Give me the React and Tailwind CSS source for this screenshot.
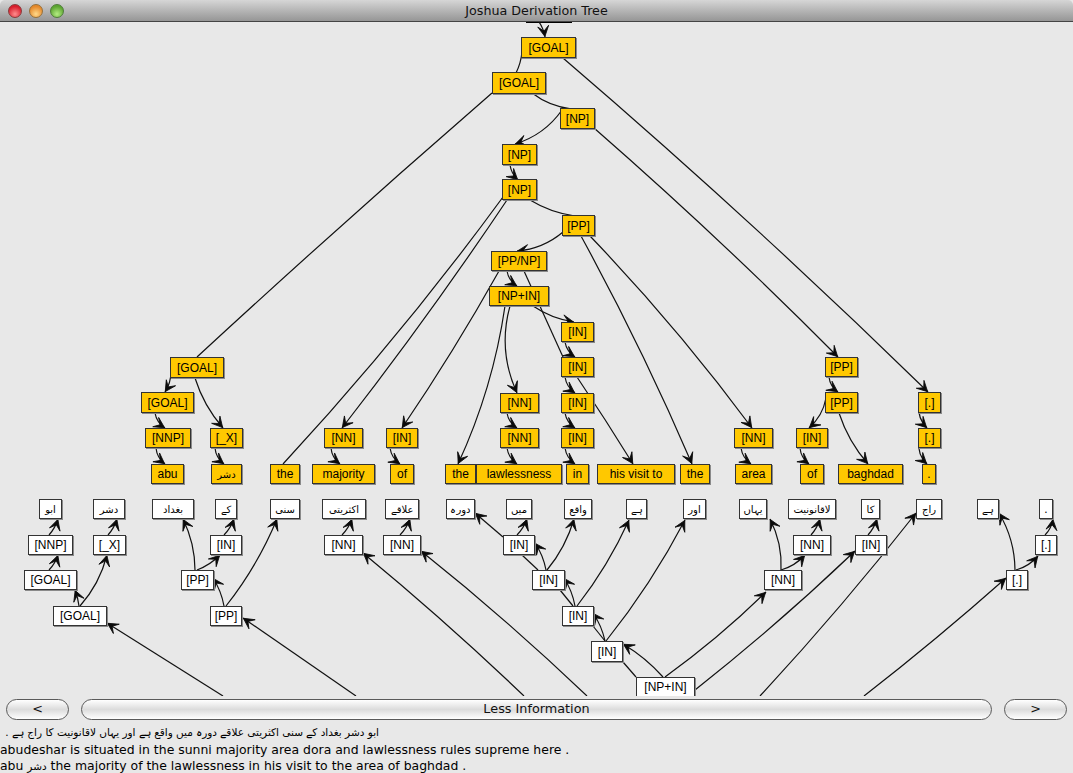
// App.jsx - Joshua derivation tree window
const nodes = [
  // source tree (orange)
  [521, 37, 55, 21, "[GOAL]"], [492, 72, 54, 22, "[GOAL]"], [560, 108, 35, 21, "[NP]"],
  [502, 144, 35, 21, "[NP]"], [502, 179, 35, 21, "[NP]"], [562, 215, 33, 21, "[PP]"],
  [491, 251, 56, 20, "[PP/NP]"], [489, 286, 60, 20, "[NP+IN]"], [561, 322, 33, 20, "[IN]"],
  [561, 357, 33, 20, "[IN]"], [561, 393, 33, 20, "[IN]"], [561, 428, 33, 20, "[IN]"],
  [500, 393, 39, 20, "[NN]"], [500, 428, 39, 20, "[NN]"],
  [170, 357, 54, 21, "[GOAL]"], [141, 392, 53, 21, "[GOAL]"], [145, 428, 46, 20, "[NNP]"],
  [210, 428, 33, 20, "[_X]"], [324, 428, 39, 20, "[NN]"], [386, 428, 32, 20, "[IN]"],
  [825, 357, 33, 20, "[PP]"], [825, 392, 33, 21, "[PP]"], [734, 428, 39, 20, "[NN]"],
  [796, 428, 32, 20, "[IN]"], [918, 392, 23, 21, "[.]"], [918, 428, 23, 20, "[.]"],
  [151, 464, 33, 20, "abu"], [211, 464, 31, 20, "دشر", 1], [270, 464, 30, 20, "the"],
  [312, 464, 63, 20, "majority"], [390, 464, 24, 20, "of"], [445, 464, 31, 20, "the"],
  [476, 464, 86, 20, "lawlessness"], [566, 464, 23, 20, "in"], [597, 464, 78, 20, "his visit to"],
  [680, 464, 30, 20, "the"], [735, 464, 37, 20, "area"], [800, 464, 24, 20, "of"],
  [838, 464, 65, 20, "baghdad"], [922, 464, 14, 20, "."],
];

const whiteNodes = [
  [39, 499, 23, 20, "ابو", 1], [93, 499, 32, 20, "دشر", 1], [152, 499, 42, 20, "بغداد", 1],
  [215, 499, 22, 20, "کے", 1], [270, 499, 30, 20, "سنی", 1], [322, 499, 44, 20, "اکثریتی", 1],
  [385, 499, 34, 20, "علاقے", 1], [446, 499, 29, 20, "دورہ", 1], [506, 499, 26, 20, "میں", 1],
  [564, 499, 28, 20, "واقع", 1], [626, 499, 21, 20, "ہے", 1], [683, 499, 23, 20, "اور", 1],
  [739, 499, 28, 20, "یہاں", 1], [788, 499, 48, 20, "لاقانونیت", 1], [861, 499, 19, 20, "کا", 1],
  [916, 499, 26, 20, "راج", 1], [977, 499, 22, 20, "ہے", 1], [1039, 499, 14, 20, "."],
  [28, 535, 45, 20, "[NNP]"], [93, 535, 33, 20, "[_X]"], [210, 535, 32, 20, "[IN]"],
  [324, 535, 39, 20, "[NN]"], [383, 535, 38, 20, "[NN]"], [503, 535, 32, 20, "[IN]"],
  [793, 535, 38, 20, "[NN]"], [855, 535, 32, 20, "[IN]"], [1035, 535, 22, 20, "[.]"],
  [24, 570, 53, 20, "[GOAL]"], [181, 570, 33, 20, "[PP]"], [532, 570, 33, 20, "[IN]"],
  [764, 570, 38, 20, "[NN]"], [1006, 570, 22, 20, "[.]"],
  [53, 606, 54, 20, "[GOAL]"], [210, 606, 32, 20, "[PP]"], [562, 606, 32, 20, "[IN]"],
  [591, 641, 32, 21, "[IN]"], [636, 677, 59, 20, "[NP+IN]"],
];

// x0 y0 -> x1 y1, bend = sideways pull of the control point, arrow = draw a head
const edges = [
  [536, 18, 545, 37, 3], [522, 52, 516, 73, 2, false], [563, 58, 928, 392, 8],
  [492, 93, 197, 357, -3, false], [532, 93, 572, 109, -6, false], [562, 110, 515, 144, 10],
  [594, 128, 838, 357, 6], [510, 165, 518, 180, -3], [503, 197, 283, 464, 10, false],
  [507, 200, 342, 428, 5], [530, 200, 575, 216, -5, false], [563, 232, 517, 251, 8],
  [581, 236, 692, 464, 6], [590, 236, 752, 428, 8], [507, 271, 517, 286, -4],
  [524, 271, 563, 357, 0, false], [499, 271, 402, 428, 4], [505, 306, 458, 464, 12],
  [510, 306, 517, 393, -16], [533, 306, 574, 322, -5], [565, 342, 575, 357, -4],
  [565, 377, 575, 393, -4], [577, 377, 633, 464, 1], [565, 413, 575, 428, -4],
  [565, 448, 575, 464, -4], [507, 413, 517, 428, -4], [507, 448, 517, 464, -4],
  [171, 372, 165, 392, 3], [195, 378, 223, 428, -6], [155, 413, 165, 428, -4],
  [156, 448, 165, 464, -4], [215, 448, 224, 464, -4], [331, 448, 340, 464, -4],
  [390, 448, 400, 464, -4], [829, 377, 838, 392, -4], [826, 398, 809, 428, 6],
  [839, 413, 868, 464, -6], [741, 448, 751, 464, -4], [800, 448, 809, 464, -4],
  [919, 405, 927, 428, -6], [919, 442, 927, 464, -6],
  // target tree
  [49, 535, 58, 519, -2], [49, 570, 58, 555, -2], [79, 606, 75, 590, -1],
  [80, 606, 107, 555, -7], [108, 535, 117, 519, -2], [195, 570, 183, 519, -6],
  [197, 570, 220, 555, -3], [224, 535, 234, 519, -2], [224, 606, 213, 578, -3],
  [226, 606, 277, 519, -7], [342, 535, 352, 519, -2], [223, 696, 107, 623, 0],
  [356, 696, 243, 618, 0], [524, 696, 363, 553, -4], [587, 696, 421, 551, -5],
  [400, 535, 410, 519, -2], [503, 537, 475, 513, 0], [517, 535, 527, 519, -2],
  [546, 570, 535, 543, -3], [547, 570, 574, 519, -6], [522, 555, 538, 570, 0, false],
  [560, 590, 573, 606, 0, false], [575, 606, 564, 578, -3], [577, 606, 629, 520, -6],
  [593, 626, 605, 641, 0, false], [605, 641, 593, 613, -3], [606, 641, 685, 520, -7],
  [663, 677, 623, 644, -4], [623, 662, 636, 677, 0, false], [665, 677, 766, 592, -5],
  [695, 690, 855, 551, -5], [760, 696, 916, 513, -5], [864, 696, 1006, 578, -3],
  [781, 570, 770, 519, -7], [781, 570, 805, 555, -4], [811, 535, 820, 519, -2],
  [868, 535, 877, 519, -2], [1015, 570, 999, 513, -8], [1016, 570, 1038, 556, -4],
  [1045, 535, 1053, 519, -3],
];

function Edge({ e }) {
  const [x0, y0, x1, y1, bend = 0, arrow = true] = e;
  const dx = x1 - x0;
  const dy = y1 - y0;
  const len = Math.hypot(dx, dy) || 1;
  const cx = (x0 + x1) / 2 + (dy / len) * bend;
  const cy = (y0 + y1) / 2 - (dx / len) * bend;
  const a = (Math.atan2(y1 - cy, x1 - cx) * 180) / Math.PI;
  return (
    <g>
      <path d={`M${x0} ${y0}Q${cx} ${cy} ${x1} ${y1}`} fill="none" stroke="#111" strokeWidth="1.2" />
      {arrow && (
        <polygon
          points="-0.5,0 -11,-5.5 -6,0 -11,5.5"
          fill="#0a0a0a"
          stroke="#0a0a0a"
          strokeWidth="0.8"
          transform={`translate(${x1} ${y1}) rotate(${a})`}
        />
      )}
    </g>
  );
}

function Node({ n, orange }) {
  const [x, y, w, h, label, urdu] = n;
  return (
    <div
      className={`absolute flex items-center justify-center whitespace-nowrap border border-[#333] shadow-[1px_1px_0_#8a8a8a] ${
        orange ? "bg-[#ffc800]" : "bg-white"
      } ${urdu ? "text-[10px] font-['DejaVu_Sans',sans-serif]" : "text-[12px] font-['Liberation_Sans',sans-serif]"} text-black`}
      style={{ left: x, top: y - 22, width: w, height: h }}
    >
      {label}
    </div>
  );
}

function PillButton({ className, children }) {
  return (
    <button
      type="button"
      className={`h-[21px] rounded-full border border-[#5a5a5a] bg-gradient-to-b from-white via-[#dcdcdc] to-white text-[12.8px] leading-none text-[#111] font-['DejaVu_Sans',sans-serif] ${className}`}
    >
      {children}
    </button>
  );
}

export default function App() {
  return (
    <div className="flex h-[773px] w-[1073px] flex-col overflow-hidden bg-[#e8e8e8] font-['DejaVu_Sans',sans-serif]">
      {/* title bar */}
      <div className="relative flex h-[22px] shrink-0 items-center justify-center rounded-t-[5px] border-b border-[#444] bg-gradient-to-b from-[#d6d6d6] to-[#969696] text-[12.7px] text-[#111]">
        <div className="absolute left-[8px] top-[4px] flex gap-[7px]">
          <span className="h-[14px] w-[14px] rounded-full border border-[#8a3a3a] bg-[radial-gradient(circle_at_50%_75%,#ff8d8d,#d81e2c_70%)]" />
          <span className="h-[14px] w-[14px] rounded-full border border-[#96703a] bg-[radial-gradient(circle_at_50%_75%,#ffd98a,#e5892b_70%)]" />
          <span className="h-[14px] w-[14px] rounded-full border border-[#4f7d3a] bg-[radial-gradient(circle_at_50%_75%,#b4ec82,#5da532_70%)]" />
        </div>
        Joshua Derivation Tree
      </div>

      {/* tree canvas */}
      <div className="relative h-[674px] shrink-0 overflow-hidden">
        <div className="absolute left-[526px] top-[-20px] h-[21px] w-[46px] border border-black bg-white" />
        <svg className="absolute left-0 top-0" width="1073" height="674" viewBox="0 22 1073 674">
          {edges.map((e, i) => (
            <Edge key={i} e={e} />
          ))}
        </svg>
        {nodes.map((n, i) => (
          <Node key={i} n={n} orange />
        ))}
        {whiteNodes.map((n, i) => (
          <Node key={i} n={n} />
        ))}
      </div>

      {/* navigation */}
      <div className="mt-[3px] flex shrink-0 gap-3 px-[6px]">
        <PillButton className="w-[63px]">&lt;</PillButton>
        <PillButton className="w-[911px]">Less Information</PillButton>
        <PillButton className="w-[63px]">&gt;</PillButton>
      </div>

      {/* sentences */}
      <div className="mt-[4px] flex flex-col text-[12.45px] leading-[16px] text-black">
        <div dir="rtl" className="h-[18px] w-[379px] text-[10.5px]">
          ابو دشر بغداد کے سنی اکثریتی علاقے دورہ میں واقع ہے اور یہاں لاقانونیت کا راج ہے .
        </div>
        <div>abudeshar is situated in the sunni majority area dora and lawlessness rules supreme here .</div>
        <div>
          abu <span className="text-[10.5px]">دشر</span> the majority of the lawlessness in his visit to the area of baghdad .
        </div>
      </div>
    </div>
  );
}
